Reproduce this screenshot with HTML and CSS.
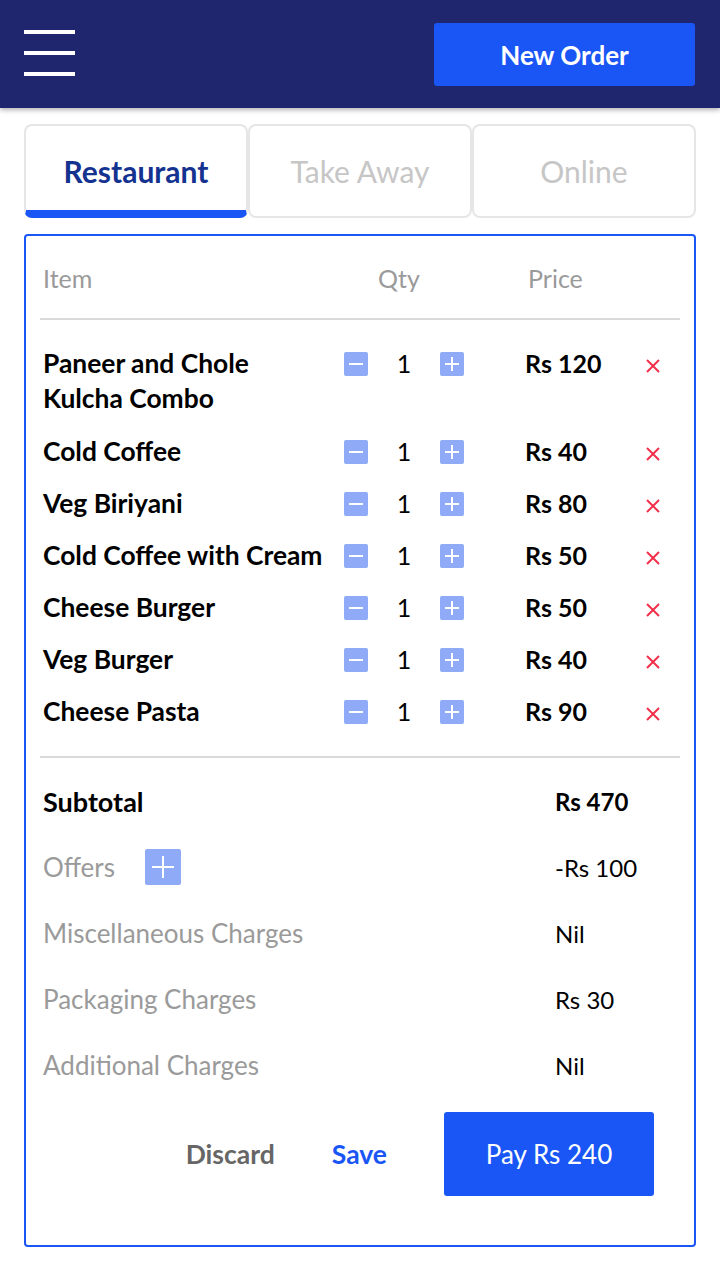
FILE: index.html
```html
<!DOCTYPE html>
<html>
<head>
<meta charset="utf-8">
<link rel="stylesheet" href="styles.css">
</head>
<body>
<header class="topbar">
  <div class="burger"><span></span><span></span><span></span></div>
  <button class="new-order">New Order</button>
</header>
<main class="main">
  <nav class="tabs">
    <div class="tab active">Restaurant</div>
    <div class="tab">Take Away</div>
    <div class="tab">Online</div>
  </nav>
  <section class="card">
    <div class="thead">
      <div class="th">Item</div>
      <div class="th th-qty">Qty</div>
      <div class="th">Price</div>
      <div></div>
    </div>
    <div class="items">
      <div class="row">
        <div class="name">Paneer and Chole Kulcha Combo</div>
        <div class="qty"><span class="qbtn"><svg viewBox="0 0 24 24" width="24" height="24"><path d="M5 12H19" stroke="#fff" stroke-width="2"/></svg></span><span class="num">1</span><span class="qbtn"><svg viewBox="0 0 24 24" width="24" height="24"><path d="M5 12H19M12 5V19" stroke="#fff" stroke-width="2"/></svg></span></div>
        <div class="price">Rs 120</div>
        <div class="del"><svg viewBox="0 0 14 14" width="14" height="14"><path d="M1 1L13 13M13 1L1 13" stroke="#f0304a" stroke-width="2"/></svg></div>
      </div>
      <div class="row">
        <div class="name">Cold Coffee</div>
        <div class="qty"><span class="qbtn"><svg viewBox="0 0 24 24" width="24" height="24"><path d="M5 12H19" stroke="#fff" stroke-width="2"/></svg></span><span class="num">1</span><span class="qbtn"><svg viewBox="0 0 24 24" width="24" height="24"><path d="M5 12H19M12 5V19" stroke="#fff" stroke-width="2"/></svg></span></div>
        <div class="price">Rs 40</div>
        <div class="del"><svg viewBox="0 0 14 14" width="14" height="14"><path d="M1 1L13 13M13 1L1 13" stroke="#f0304a" stroke-width="2"/></svg></div>
      </div>
      <div class="row">
        <div class="name">Veg Biriyani</div>
        <div class="qty"><span class="qbtn"><svg viewBox="0 0 24 24" width="24" height="24"><path d="M5 12H19" stroke="#fff" stroke-width="2"/></svg></span><span class="num">1</span><span class="qbtn"><svg viewBox="0 0 24 24" width="24" height="24"><path d="M5 12H19M12 5V19" stroke="#fff" stroke-width="2"/></svg></span></div>
        <div class="price">Rs 80</div>
        <div class="del"><svg viewBox="0 0 14 14" width="14" height="14"><path d="M1 1L13 13M13 1L1 13" stroke="#f0304a" stroke-width="2"/></svg></div>
      </div>
      <div class="row">
        <div class="name">Cold Coffee with Cream</div>
        <div class="qty"><span class="qbtn"><svg viewBox="0 0 24 24" width="24" height="24"><path d="M5 12H19" stroke="#fff" stroke-width="2"/></svg></span><span class="num">1</span><span class="qbtn"><svg viewBox="0 0 24 24" width="24" height="24"><path d="M5 12H19M12 5V19" stroke="#fff" stroke-width="2"/></svg></span></div>
        <div class="price">Rs 50</div>
        <div class="del"><svg viewBox="0 0 14 14" width="14" height="14"><path d="M1 1L13 13M13 1L1 13" stroke="#f0304a" stroke-width="2"/></svg></div>
      </div>
      <div class="row">
        <div class="name">Cheese Burger</div>
        <div class="qty"><span class="qbtn"><svg viewBox="0 0 24 24" width="24" height="24"><path d="M5 12H19" stroke="#fff" stroke-width="2"/></svg></span><span class="num">1</span><span class="qbtn"><svg viewBox="0 0 24 24" width="24" height="24"><path d="M5 12H19M12 5V19" stroke="#fff" stroke-width="2"/></svg></span></div>
        <div class="price">Rs 50</div>
        <div class="del"><svg viewBox="0 0 14 14" width="14" height="14"><path d="M1 1L13 13M13 1L1 13" stroke="#f0304a" stroke-width="2"/></svg></div>
      </div>
      <div class="row">
        <div class="name">Veg Burger</div>
        <div class="qty"><span class="qbtn"><svg viewBox="0 0 24 24" width="24" height="24"><path d="M5 12H19" stroke="#fff" stroke-width="2"/></svg></span><span class="num">1</span><span class="qbtn"><svg viewBox="0 0 24 24" width="24" height="24"><path d="M5 12H19M12 5V19" stroke="#fff" stroke-width="2"/></svg></span></div>
        <div class="price">Rs 40</div>
        <div class="del"><svg viewBox="0 0 14 14" width="14" height="14"><path d="M1 1L13 13M13 1L1 13" stroke="#f0304a" stroke-width="2"/></svg></div>
      </div>
      <div class="row">
        <div class="name">Cheese Pasta</div>
        <div class="qty"><span class="qbtn"><svg viewBox="0 0 24 24" width="24" height="24"><path d="M5 12H19" stroke="#fff" stroke-width="2"/></svg></span><span class="num">1</span><span class="qbtn"><svg viewBox="0 0 24 24" width="24" height="24"><path d="M5 12H19M12 5V19" stroke="#fff" stroke-width="2"/></svg></span></div>
        <div class="price">Rs 90</div>
        <div class="del"><svg viewBox="0 0 14 14" width="14" height="14"><path d="M1 1L13 13M13 1L1 13" stroke="#f0304a" stroke-width="2"/></svg></div>
      </div>
    </div>
    <div class="summary">
      <div class="srow strong"><div class="slabel">Subtotal</div><div class="sval">Rs 470</div></div>
      <div class="srow"><div class="slabel">Offers <span class="offer-btn"><svg viewBox="0 0 36 36" width="36" height="36"><path d="M18 7V29M7 18H29" stroke="#fff" stroke-width="2"/></svg></span></div><div class="sval">-Rs 100</div></div>
      <div class="srow"><div class="slabel">Miscellaneous Charges</div><div class="sval">Nil</div></div>
      <div class="srow"><div class="slabel">Packaging Charges</div><div class="sval">Rs 30</div></div>
      <div class="srow"><div class="slabel">Additional Charges</div><div class="sval">Nil</div></div>
    </div>
    <div class="actions">
      <button class="link discard">Discard</button>
      <button class="link save">Save</button>
      <button class="pay">Pay Rs 240</button>
    </div>
  </section>
</main>
</body>
</html>
```
FILE: styles.css
```css
* { box-sizing: border-box; }
html, body { margin: 0; padding: 0; background: #fff; }
body {
  width: 720px;
  font-family: Lato, "Liberation Sans", sans-serif;
  color: #000;
}
button { font-family: inherit; border: 0; cursor: pointer; }

.topbar {
  height: 108px;
  background: #1f266d;
  display: flex;
  align-items: center;
  justify-content: space-between;
  padding: 0 25px 0 24px;
  box-shadow: 0 2px 5px rgba(0,0,0,0.3);
  position: relative;
}
.burger { width: 51px; display: flex; flex-direction: column; gap: 17px; margin-top: -3px; }
.burger span { display: block; height: 4px; background: #fff; }
.new-order {
  width: 261px; height: 63px;
  background: #1a56f5; color: #fff;
  font-size: 26px; font-weight: 700;
  border-radius: 3px;
  padding-top: 2px;
}

.main { padding: 16px 24px 0; }
.tabs { display: grid; grid-template-columns: repeat(3, 1fr); height: 94px; }
.tab {
  border: 2px solid #e6e6e6;
  border-radius: 8px;
  display: flex; align-items: center; justify-content: center;
  font-size: 30px; color: #c6c6c6;
  padding-top: 0;
}
.tab.active {
  color: #14328f; font-weight: 700;
  border-bottom: 8px solid #1a56f5;
  padding-top: 5px;
}

.card {
  margin-top: 16px;
  border: 2px solid #1a56f5;
  border-radius: 4px;
  padding: 0 14px 49px;
}
.thead, .row {
  display: grid;
  grid-template-columns: 304px 181px 110px 36px;
}
.thead {
  padding: 25px 0 23px;
  border-bottom: 2px solid #dadada;
  font-size: 25px; line-height: 34px; color: #9a9a9a;
}
.th { padding-left: 3px; }
.th-qty { padding-left: 34px; }

.items { padding: 26px 0 27px; border-bottom: 2px solid #dadada; display: flex; flex-direction: column; gap: 17px; }
.row { font-size: 25px; line-height: 35px; font-weight: 700; align-items: start; }
.row:first-child { margin-bottom: 1px; }
.name { padding-left: 3px; padding-right: 21px; font-size: 26.4px; }
.qty { display: flex; align-items: center; height: 35px; font-weight: 400; }
.qbtn {
  width: 24px; height: 24px; border-radius: 2px;
  background: #8fabf7;
  display: block;
}
.qbtn svg { display: block; }
.num { width: 72px; text-align: center; }
.del { height: 35px; display: flex; align-items: center; justify-content: center; padding-top: 4px; }
.del svg { display: block; }

.summary { padding-top: 10px; }
.srow { display: grid; grid-template-columns: 515px 1fr; height: 66px; align-items: center; font-size: 26px; color: #9a9a9a; }
.srow .sval { color: #000; font-size: 24px; }
.srow.strong { font-weight: 700; color: #000; }
.srow.strong .slabel { font-size: 27px; }
.slabel { padding-left: 3px; display: flex; align-items: center; gap: 30px; }
.offer-btn { width: 36px; height: 36px; background: #8fabf7; border-radius: 2px; display: block; }
.offer-btn svg { display: block; }

.actions {
  margin-top: 14px;
  display: flex; justify-content: flex-end; align-items: center;
  gap: 57px; padding-right: 26px;
}
.link { background: none; font-size: 26.5px; font-weight: 700; padding: 0; }
.discard { color: #666; }
.save { color: #1a56f5; }
.pay {
  width: 210px; height: 84px; border-radius: 3px;
  background: #1a56f5; color: #fff;
  font-size: 26px; font-weight: 400;
}
```
